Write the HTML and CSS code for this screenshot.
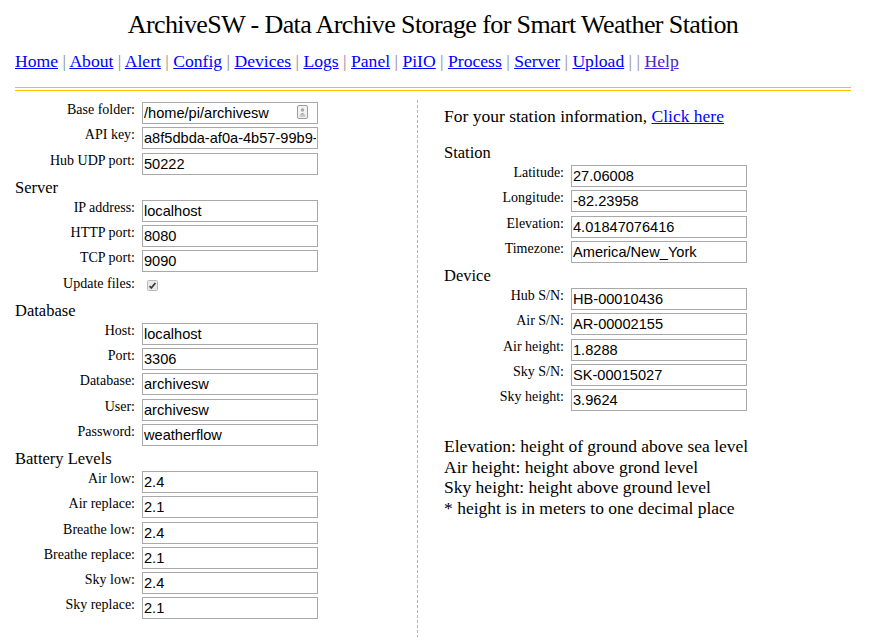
FILE: index.html
```html
<!DOCTYPE html>
<html lang="en">
<head>
    <meta charset="UTF-8">
    <title>ArchiveSW - Config</title>
    <link rel="stylesheet" href="styles.css">
</head>
<body>
<div class="page">
    <h1 class="title">ArchiveSW - Data Archive Storage for Smart Weather Station</h1>

    <!-- Menu -->
    <div class="menu">
        <a href="#">Home</a> <span class="sep">|</span>
        <a href="#">About</a> <span class="sep">|</span>
        <a href="#">Alert</a> <span class="sep">|</span>
        <a href="#">Config</a> <span class="sep">|</span>
        <a href="#">Devices</a> <span class="sep">|</span>
        <a href="#">Logs</a> <span class="sep">|</span>
        <a href="#">Panel</a> <span class="sep">|</span>
        <a href="#">PiIO</a> <span class="sep">|</span>
        <a href="#">Process</a> <span class="sep">|</span>
        <a href="#">Server</a> <span class="sep">|</span>
        <a href="#">Upload</a> <span class="sep">|</span> <span class="sep">|</span>
        <a href="#" class="visited">Help</a>
    </div>
    <hr class="rule">

    <div class="columns">
        <!-- Left: program settings -->
        <div class="col col-left">
            <div class="row">
                <label>Base folder:</label>
                <span class="field">
                    <input type="text" value="/home/pi/archivesw">
                    <svg class="field-icon" width="11" height="14" viewBox="0 0 11 14">
                        <rect x="0.5" y="0.5" width="10" height="13" rx="1.5" fill="#f3f3f3" stroke="#9c9c9c"/>
                        <circle cx="5.5" cy="5" r="1.7" fill="#a6a6a6"/>
                        <path d="M2.8 9.8 Q5.5 6 8.2 9.8 Z" fill="#a6a6a6"/>
                        <rect x="2.5" y="10.5" width="6" height="1" fill="#a6a6a6"/>
                    </svg>
                </span>
            </div>
            <div class="row"><label>API key:</label><input type="text" value="a8f5dbda-af0a-4b57-99b9-c8d3b5e6f2a1"></div>
            <div class="row"><label>Hub UDP port:</label><input type="text" value="50222"></div>

            <div class="group">Server</div>
            <div class="row"><label>IP address:</label><input type="text" value="localhost"></div>
            <div class="row"><label>HTTP port:</label><input type="text" value="8080"></div>
            <div class="row"><label>TCP port:</label><input type="text" value="9090"></div>
            <div class="row">
                <label>Update files:</label>
                <svg class="check" width="11" height="11" viewBox="0 0 11 11">
                    <rect x="0.5" y="0.5" width="10" height="10" rx="1" fill="#e9e9e9" stroke="#b8b8b8"/>
                    <path d="M2.6 6.2 L4.3 8 L8.4 3" fill="none" stroke="#3a3a3a" stroke-width="1.8"/>
                </svg>
            </div>

            <div class="group">Database</div>
            <div class="row"><label>Host:</label><input type="text" value="localhost"></div>
            <div class="row"><label>Port:</label><input type="text" value="3306"></div>
            <div class="row"><label>Database:</label><input type="text" value="archivesw"></div>
            <div class="row"><label>User:</label><input type="text" value="archivesw"></div>
            <div class="row"><label>Password:</label><input type="text" value="weatherflow"></div>

            <div class="group">Battery Levels</div>
            <div class="row"><label>Air low:</label><input type="text" value="2.4"></div>
            <div class="row"><label>Air replace:</label><input type="text" value="2.1"></div>
            <div class="row"><label>Breathe low:</label><input type="text" value="2.4"></div>
            <div class="row"><label>Breathe replace:</label><input type="text" value="2.1"></div>
            <div class="row"><label>Sky low:</label><input type="text" value="2.4"></div>
            <div class="row"><label>Sky replace:</label><input type="text" value="2.1"></div>
        </div>

        <!-- Right: station settings -->
        <div class="col col-right">
            <p class="intro">For your station information, <a href="#">Click here</a></p>

            <div class="group">Station</div>
            <div class="row"><label>Latitude:</label><input type="text" value="27.06008"></div>
            <div class="row"><label>Longitude:</label><input type="text" value="-82.23958"></div>
            <div class="row"><label>Elevation:</label><input type="text" value="4.01847076416"></div>
            <div class="row"><label>Timezone:</label><input type="text" value="America/New_York"></div>

            <div class="group">Device</div>
            <div class="row"><label>Hub S/N:</label><input type="text" value="HB-00010436"></div>
            <div class="row"><label>Air S/N:</label><input type="text" value="AR-00002155"></div>
            <div class="row"><label>Air height:</label><input type="text" value="1.8288"></div>
            <div class="row"><label>Sky S/N:</label><input type="text" value="SK-00015027"></div>
            <div class="row"><label>Sky height:</label><input type="text" value="3.9624"></div>

            <div class="notes">
                Elevation: height of ground above sea level<br>
                Air height: height above grond level<br>
                Sky height: height above ground level<br>
                * height is in meters to one decimal place
            </div>
        </div>
    </div>
</div>
</body>
</html>
```

FILE: styles.css
```css
body {
    margin: 0;
    font-family: "Liberation Serif", "Times New Roman", serif;
    color: #000;
    background: #fff;
}

.page {
    width: 836px;
    margin-left: 15px;
}

.title {
    margin: 10px 0 0;
    font-size: 26px;
    font-weight: normal;
    line-height: 30px;
    letter-spacing: -0.6px;
    text-align: center;
}

.menu {
    margin-top: 11px;
    font-size: 17.6px;
    line-height: 20px;
}

.menu a {
    color: #0000ff;
}

.menu a.visited {
    color: #4f23d8;
}

.sep {
    color: #8c8c8c;
}

.rule {
    margin: 16px 0 0;
    height: 2px;
    border: 0;
    border-top: 1px solid #ffc000;
    border-bottom: 1px solid #ffc000;
}

.columns {
    display: flex;
    margin-top: 9px;
}

.col-left {
    width: 402px;
    padding: 2px 0 20px;
    border-right: 1px dashed #f7b500;
}

.col-right {
    flex: 1;
    padding: 6px 0 0 26px;
}

.row {
    display: flex;
    align-items: flex-start;
    height: 22px;
    margin-bottom: 3.25px;
}

.row label {
    width: 120px;
    margin-right: 7px;
    text-align: right;
    font-size: 14px;
    line-height: 16px;
}

.row input {
    width: 176px;
    height: 22px;
    box-sizing: border-box;
    margin: 0;
    padding: 0 1px;
    border: 1px solid #a9a9a9;
    font-family: "Liberation Sans", Arial, sans-serif;
    font-size: 14.6px;
    color: #000;
    background: #fff;
}

.field {
    position: relative;
    display: block;
}

.field-icon {
    position: absolute;
    left: 155px;
    top: 3px;
}

.check {
    margin: 4px 0 0 5px;
}

.group {
    height: 20px;
    margin-bottom: 2px;
    font-size: 16.5px;
    line-height: 20px;
}

.intro {
    margin: 0 0 17px;
    font-size: 17.5px;
    line-height: 20px;
}

.intro a {
    color: #0000ff;
}

.notes {
    margin-top: 25px;
    font-size: 17.5px;
    line-height: 20.6px;
}
```
